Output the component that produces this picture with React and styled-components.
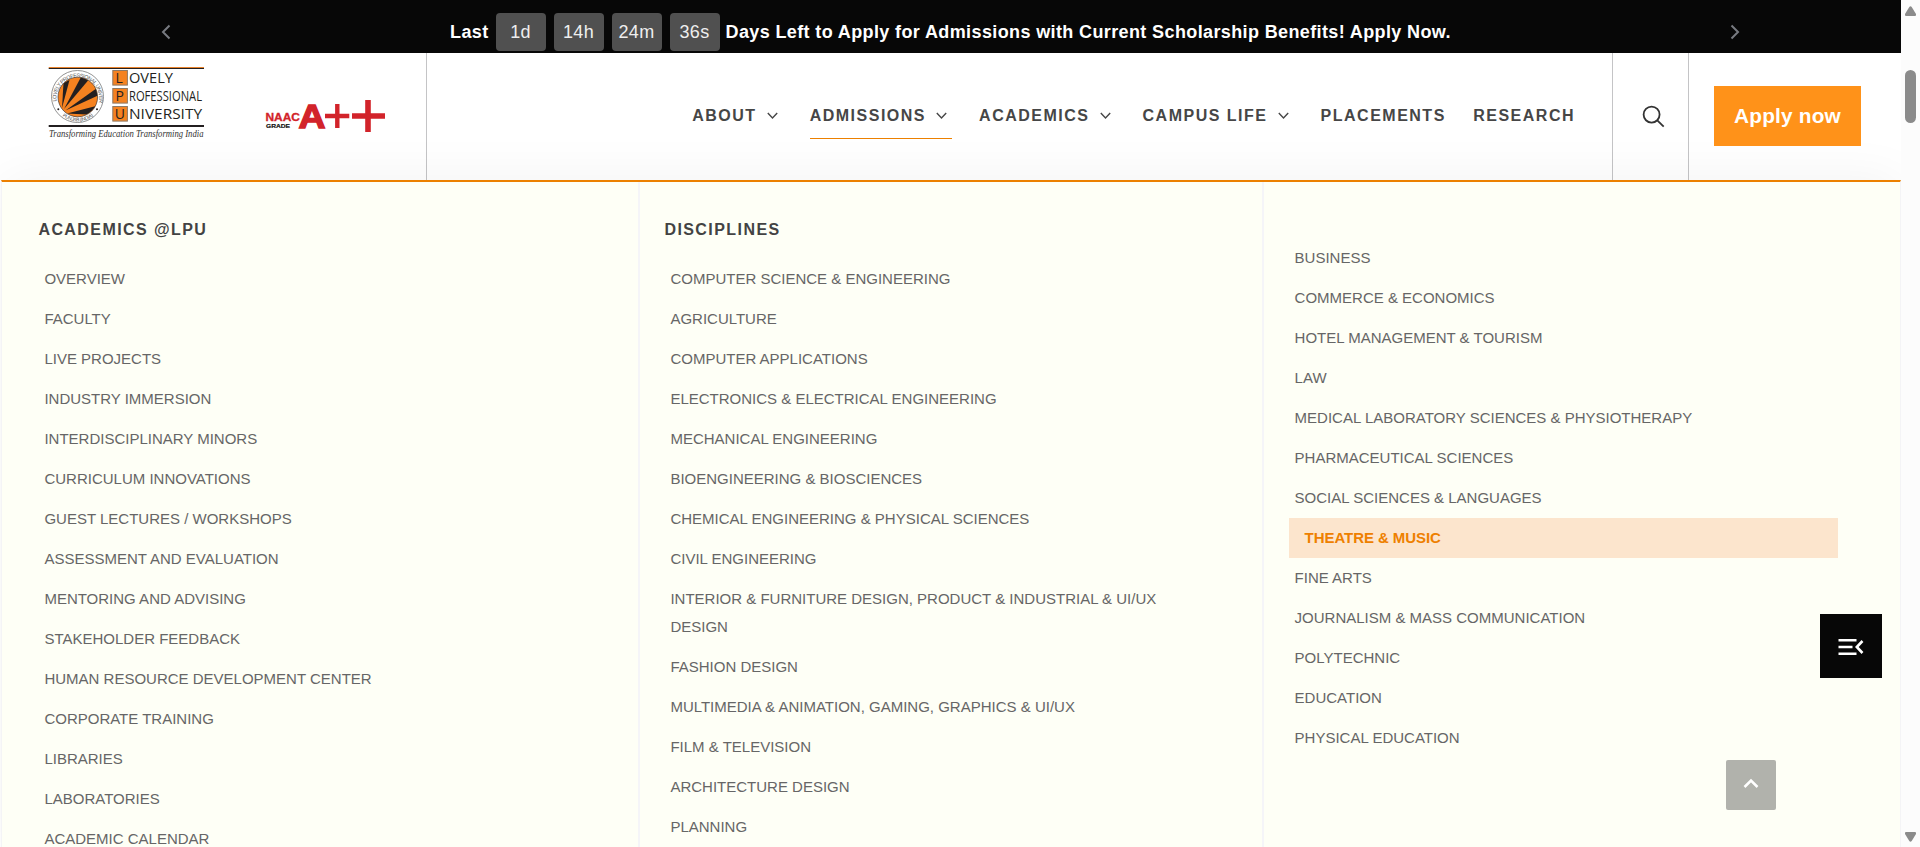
import React from 'react';
import styled, { createGlobalStyle, css } from 'styled-components';

const GlobalStyle = createGlobalStyle`
  * { box-sizing: border-box; }
  html, body { margin: 0; padding: 0; height: 100%; overflow: hidden; background: #fff; }
  body { font-family: "Liberation Sans", Arial, sans-serif; color: #464646; }
  button { font: inherit; border: 0; padding: 0; cursor: pointer; }
  a { color: inherit; text-decoration: none; }
  svg { display: block; overflow: visible; }
`;

const Screen = styled.div`
  display: flex;
  height: 847px;
  overflow: hidden;
`;

const Page = styled.div`
  flex: 1;
  min-width: 0;
  display: flex;
  flex-direction: column;
`;

/* ---------- announcement bar ---------- */
const Announcement = styled.div`
  display: flex;
  align-items: center;
  height: 53px;
  padding: 13px 161px 2px 161px;
  background: #070707;
  color: #fff;
`;

const Arrow = styled.button`
  width: 10px;
  background: none;
  color: #777a80;
`;

const Message = styled.div`
  flex: 1;
  display: flex;
  justify-content: center;
  align-items: center;
  font-size: 18px;
  font-weight: 700;
  letter-spacing: 0.38px;
  white-space: pre;
`;

const Units = styled.div`
  display: flex;
  gap: 8px;
  margin: 0 6px 0 7px;
`;

const Unit = styled.span`
  width: 50px;
  height: 38px;
  line-height: 38px;
  border-radius: 4px;
  background: #505050;
  color: #eee;
  font-weight: 400;
  text-align: center;
`;

/* ---------- header ---------- */
const Header = styled.header`
  display: flex;
  height: 127px;
  flex: none;
  background: #fff;
`;

const Brand = styled.div`
  display: flex;
  width: 427px;
  padding: 12px 0 0 48px;
  gap: 60px;
  border-right: 1px solid #c4c4c6;
`;

const Grade = styled.div`
  padding-top: 34px;
`;

const Nav = styled.nav`
  flex: 1;
  display: flex;
  justify-content: flex-end;
  align-items: flex-start;
  padding: 44px 37px 0 0;
  gap: 27.4px;
`;

const NavItem = styled.a`
  display: flex;
  align-items: center;
  gap: 10.2px;
  height: 42px;
  padding-bottom: 4px;
  font-size: 16px;
  font-weight: 700;
  letter-spacing: 1.5px;
  white-space: nowrap;
  color: #464646;
  border-bottom: 1px solid ${(p) => (p.$active ? '#ec8000' : 'transparent')};
  svg { margin-right: 4.5px; }
`;

const SearchCell = styled.div`
  width: 77px;
  display: flex;
  justify-content: center;
  padding: 52px 0 0 5px;
  border: solid #c4c4c6;
  border-width: 0 1px;
`;

const ApplyCell = styled.div`
  width: 212px;
  padding: 33px 0 0 25px;
`;

const ApplyButton = styled.button`
  position: relative;
  z-index: 2;
  width: 147px;
  height: 60px;
  background: #ff9219;
  color: #fff;
  font-size: 20.8px;
  font-weight: 700;
  letter-spacing: 0.2px;
`;

/* ---------- mega menu ---------- */
const MegaMenu = styled.div`
  flex: 1;
  min-height: 0;
  display: grid;
  grid-template-columns: 636px 624px 1fr;
  margin-left: 1px;
  border-left: 1px solid #f4f4f6;
  border-right: 1px solid #f4f4f6;
  border-top: 2px solid #ec8000;
  background: #fefff6;
  box-shadow: 0 0 50px rgba(0, 0, 20, 0.055);
  position: relative;
`;

const Column = styled.section`
  padding: ${(p) => p.$top}px 30px 0 ${(p) => p.$left}px;
  border-left: ${(p) => (p.$divided ? '2px solid #f5f5f8' : '0')};
`;

const Heading = styled.h3`
  margin: 0 0 16px;
  height: 26px;
  line-height: 26px;
  font-size: 16px;
  font-weight: 700;
  letter-spacing: 1.43px;
  color: #434343;
`;

const List = styled.ul`
  width: 549px;
  margin: 0;
  padding: 0;
  list-style: none;
`;

const Item = styled.li`
  padding: 5.5px 6px 6.5px;
  line-height: 28px;
  font-size: 15px;
  color: #666;
  ${(p) =>
    p.$active &&
    css`
      padding-left: 16px;
      background: #fce5cd;
      color: #ee8000;
      font-weight: 700;
      letter-spacing: -0.07px;
    `}
`;

/* ---------- floating controls ---------- */
const FloatButton = styled.button`
  position: fixed;
  z-index: 5;
  display: flex;
  align-items: center;
  justify-content: center;
`;

const DrawerButton = styled(FloatButton)`
  left: 1820px;
  top: 614px;
  width: 62px;
  height: 64px;
  padding-top: 2px;
  background: #070707;
`;

const TopButton = styled(FloatButton)`
  left: 1726px;
  top: 760px;
  width: 50px;
  height: 50px;
  padding-bottom: 4px;
  border-radius: 2px;
  background: #b1b2ac;
`;

/* ---------- scroll bar ---------- */
const Scrollbar = styled.div`
  position: relative;
  width: 19px;
  display: flex;
  flex-direction: column;
  align-items: center;
  padding: 6px 0 5px;
  background: #fcfcfc;
`;

const Thumb = styled.div`
  width: 11px;
  height: 53px;
  margin: 54px 0 auto;
  border-radius: 6px;
  background: #8b8b8b;
`;

const columns = [
  {
    title: 'ACADEMICS @LPU',
    top: 35,
    left: 36.4,
    items: ['OVERVIEW', 'FACULTY', 'LIVE PROJECTS', 'INDUSTRY IMMERSION', 'INTERDISCIPLINARY MINORS',
      'CURRICULUM INNOVATIONS', 'GUEST LECTURES / WORKSHOPS', 'ASSESSMENT AND EVALUATION',
      'MENTORING AND ADVISING', 'STAKEHOLDER FEEDBACK', 'HUMAN RESOURCE DEVELOPMENT CENTER',
      'CORPORATE TRAINING', 'LIBRARIES', 'LABORATORIES', 'ACADEMIC CALENDAR'],
  },
  {
    title: 'DISCIPLINES',
    top: 35,
    left: 24.4,
    items: ['COMPUTER SCIENCE & ENGINEERING', 'AGRICULTURE', 'COMPUTER APPLICATIONS',
      'ELECTRONICS & ELECTRICAL ENGINEERING', 'MECHANICAL ENGINEERING', 'BIOENGINEERING & BIOSCIENCES',
      'CHEMICAL ENGINEERING & PHYSICAL SCIENCES', 'CIVIL ENGINEERING',
      'INTERIOR & FURNITURE DESIGN, PRODUCT & INDUSTRIAL & UI/UX DESIGN', 'FASHION DESIGN',
      'MULTIMEDIA & ANIMATION, GAMING, GRAPHICS & UI/UX', 'FILM & TELEVISION', 'ARCHITECTURE DESIGN',
      'PLANNING'],
  },
  {
    top: 56,
    left: 24.6,
    active: 'THEATRE & MUSIC',
    items: ['BUSINESS', 'COMMERCE & ECONOMICS', 'HOTEL MANAGEMENT & TOURISM', 'LAW',
      'MEDICAL LABORATORY SCIENCES & PHYSIOTHERAPY', 'PHARMACEUTICAL SCIENCES',
      'SOCIAL SCIENCES & LANGUAGES', 'THEATRE & MUSIC', 'FINE ARTS', 'JOURNALISM & MASS COMMUNICATION',
      'POLYTECHNIC', 'EDUCATION', 'PHYSICAL EDUCATION'],
  },
];

const navItems = [
  { label: 'ABOUT', menu: true },
  { label: 'ADMISSIONS', menu: true, active: true },
  { label: 'ACADEMICS', menu: true },
  { label: 'CAMPUS LIFE', menu: true },
  { label: 'PLACEMENTS' },
  { label: 'RESEARCH' },
];

function UniversityLogo() {
  const rows = [
    ['L', 'OVELY', 44, 5],
    ['P', 'ROFESSIONAL', 73, 23],
    ['U', 'NIVERSITY', 73, 41],
  ];
  return (
    <svg width="158" height="78" viewBox="48 65 158 78">
      <defs>
        <clipPath id="disc"><circle cx="77.8" cy="97" r="19.6" /></clipPath>
        <path id="ringTop" d="M56.6 101.5A21.4 21.4 0 1 1 99 101.5" />
        <path id="ringBottom" d="M59.5 113.4A25 25 0 0 0 96 113.4" />
      </defs>
      <rect x="48.7" y="67" width="155.3" height="1" fill="#e8832c" />
      <rect x="48.7" y="68" width="155.3" height="1" fill="#231f20" />
      <circle cx="77.5" cy="96.5" r="26" fill="#fff" stroke="#777" strokeWidth="0.8" />
      <text fontSize="5.4" fontFamily="Liberation Sans, sans-serif" fill="#555">
        <textPath href="#ringTop" textLength="84">LOVELY PROFESSIONAL UNIVERSITY</textPath>
      </text>
      <text fontSize="5" fontFamily="Liberation Sans, sans-serif" fill="#555">
        <textPath href="#ringBottom" startOffset="4" textLength="33">PUNJAB (INDIA)</textPath>
      </text>
      <circle cx="58.3" cy="109.3" r="1" fill="#231f20" />
      <circle cx="97" cy="109.3" r="1" fill="#231f20" />
      <circle cx="77.8" cy="97" r="19.8" fill="#f58220" stroke="#231f20" strokeWidth="0.6" />
      <g clipPath="url(#disc)" fill="#231f20">
        <path d="M62 108L63.500 83L69.500 80Z" />
        <path d="M64 109L81 77L88.500 80Z" />
        <path d="M65.500 110.500L97 88L98 95.500Z" />
        <path d="M67 113.500L98 105.500L96 115Z" />
      </g>
      {rows.map(([initial, rest, width, y]) => (
        <g key={initial} fontFamily="Open Sans, sans-serif" fill="#231f20" fontSize="15">
          <rect x="112.8" y={65.5 + y} width="14.6" height="14.6" fill="#f58220" stroke="#8d7965" />
          <text x={initial === 'U' ? 114.8 : 115.6} y={77.8 + y} fontSize="14">{initial}</text>
          <text x="129" y={78 + y} textLength={width} lengthAdjust="spacingAndGlyphs">{rest}</text>
        </g>
      ))}
      <rect x="48.7" y="125" width="155.3" height="2" fill="#231f20" />
      <text x="49" y="137" fontFamily="Liberation Serif, serif" fontStyle="italic" fontSize="10.5" fill="#333"
        textLength="154.5" lengthAdjust="spacingAndGlyphs">Transforming Education Transforming India</text>
    </svg>
  );
}

function GradeLogo() {
  return (
    <svg width="120" height="34" viewBox="266 99 120 34" fontFamily="Liberation Sans, sans-serif" fontWeight="700">
      <text x="265.5" y="121" fontSize="11" fill="#d2232a" stroke="#d2232a" strokeWidth="0.3" textLength="34.5" lengthAdjust="spacingAndGlyphs">NAAC</text>
      <text x="266" y="127.5" fontSize="6.2" fill="#111" stroke="#111" strokeWidth="0.2" textLength="24" lengthAdjust="spacingAndGlyphs">GRADE</text>
      <text x="298.5" y="127.5" fontSize="33" fill="#d2232a" stroke="#d2232a" strokeWidth="1.4" textLength="27" lengthAdjust="spacingAndGlyphs">A</text>
      <path d="M325 116H349.3M337.3 104V128" stroke="#d2232a" strokeWidth="4.4" />
      <path d="M352 116H385M368 100V132" stroke="#d2232a" strokeWidth="5.6" />
    </svg>
  );
}

const Chevron = ({ size, d, stroke, width }) => (
  <svg width={size[0]} height={size[1]} viewBox={`0 0 ${size[0]} ${size[1]}`} fill="none" stroke={stroke} strokeWidth={width}>
    <path d={d} />
  </svg>
);

export default function App() {
  return (
    <Screen>
      <GlobalStyle />
      <Page>
        <Announcement>
          <Arrow aria-label="Previous"><Chevron size={[10, 16]} d="M8.5 1.5L2 8L8.5 14.5" stroke="#777a80" width={2} /></Arrow>
          <Message>
            Last
            <Units>
              {['1d', '14h', '24m', '36s'].map((u) => <Unit key={u}>{u}</Unit>)}
            </Units>
            Days Left to Apply for Admissions with Current Scholarship Benefits! Apply Now.
          </Message>
          <Arrow aria-label="Next"><Chevron size={[10, 16]} d="M1.5 1.5L8 8L1.5 14.5" stroke="#777a80" width={2} /></Arrow>
        </Announcement>
        <Header>
          <Brand>
            <UniversityLogo />
            <Grade><GradeLogo /></Grade>
          </Brand>
          <Nav>
            {navItems.map((n) => (
              <NavItem key={n.label} $active={n.active}>
                {n.label}
                {n.menu && <Chevron size={[11, 8]} d="M0.8 1L5.5 6L10.2 1" stroke="#464646" width={1.4} />}
              </NavItem>
            ))}
          </Nav>
          <SearchCell>
            <svg width="23" height="23" viewBox="0 0 23 23" fill="none" stroke="#333" strokeWidth="1.8">
              <circle cx="9.6" cy="9.6" r="8" />
              <path d="M15.3 15.3L21.7 21.7" />
            </svg>
          </SearchCell>
          <ApplyCell><ApplyButton>Apply now</ApplyButton></ApplyCell>
        </Header>
        <MegaMenu>
          {columns.map((c, i) => (
            <Column key={i} $top={c.top} $left={c.left} $divided={i > 0}>
              {c.title && <Heading>{c.title}</Heading>}
              <List>
                {c.items.map((t) => <Item key={t} $active={t === c.active}>{t}</Item>)}
              </List>
            </Column>
          ))}
        </MegaMenu>
      </Page>
      <Scrollbar>
        <svg width="13" height="10" viewBox="0 0 13 10"><path d="M5.3 1Q6.5 -0.5 7.7 1L12 8Q12.500 9.800 11 10H2Q0.500 9.800 1 8Z" fill="#8b8b8b" /></svg>
        <Thumb />
        <svg width="13" height="10" viewBox="0 0 13 10"><path d="M5.3 9Q6.5 10.5 7.7 9L12 2Q12.500 0.200 11 0H2Q0.500 0.200 1 2Z" fill="#8b8b8b" /></svg>
      </Scrollbar>
      <DrawerButton aria-label="Open quick links">
        <svg width="26" height="18" viewBox="0 0 26 18" fill="none" stroke="#fff" strokeWidth="2.6">
          <path d="M0.5 2.3H18.5M0.5 9H14.5M0.5 15.7H18.5M24.5 3L18.8 9L24.5 15" />
        </svg>
      </DrawerButton>
      <TopButton aria-label="Back to top">
        <Chevron size={[16, 11]} d="M1.5 9L8 2.5L14.5 9" stroke="#fff" width={2.5} />
      </TopButton>
    </Screen>
  );
}
